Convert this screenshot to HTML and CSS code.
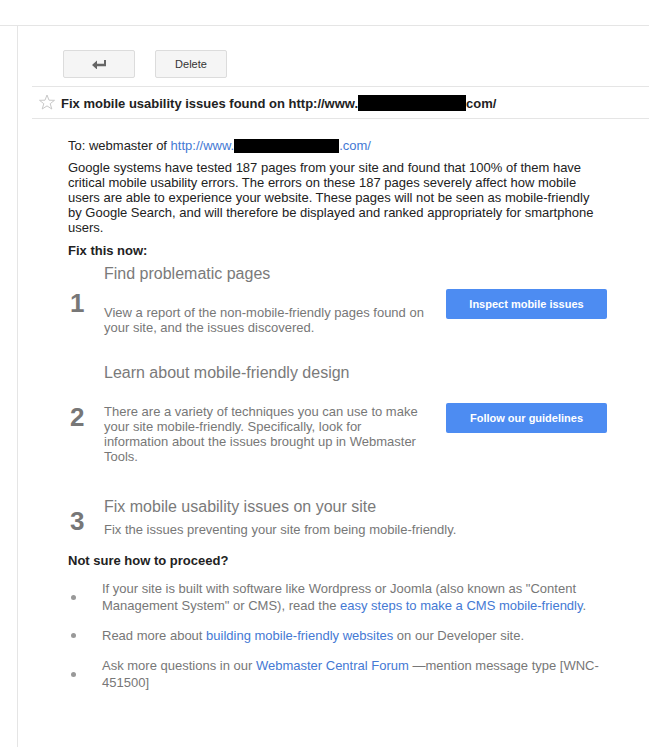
FILE: index.html
```html
<!doctype html>
<html lang="en">
<head>
  <title>Fix mobile usability issues</title>
  <link rel="stylesheet" href="styles.css">
</head>
<body>
  <div class="topbar"></div>
  <div class="main">
    <div class="toolbar">
      <button class="tool-btn" title="Back">
        <svg width="15" height="10" viewBox="0 0 15 10">
          <path d="M0 6 L5 1.5 V4.8 H12 V1 H14 V7.2 H5 V10.5 Z" fill="#666"/>
        </svg>
      </button>
      <button class="tool-btn">Delete</button>
    </div>
    <div class="subject">
      <svg class="star" width="16" height="16" viewBox="0 0 16 16">
        <polygon points="8,1 10,6.2 15.5,6.3 11.2,9.7 12.8,15 8,11.9 3.2,15 4.8,9.7 0.5,6.3 6,6.2"
          fill="none" stroke="#c8c8c8" stroke-width="1"/>
      </svg>
      <span class="subject-text">Fix mobile usability issues found on http://www.<span class="redact redact-title"></span>com/</span>
    </div>
    <div class="message">
      <p class="to">To: webmaster of <a href="#">http://www.<span class="redact redact-to"></span>.com/</a></p>
      <p class="intro">Google systems have tested 187 pages from your site and found that 100% of them have critical mobile usability errors. The errors on these 187 pages severely affect how mobile users are able to experience your website. These pages will not be seen as mobile-friendly by Google Search, and will therefore be displayed and ranked appropriately for smartphone users.</p>
      <h3 class="section">Fix this now:</h3>

      <div class="step">
        <div class="step-num">1</div>
        <div class="step-body">
          <div class="step-title">Find problematic pages</div>
          <div class="step-desc spaced">View a report of the non-mobile-friendly pages found on your site, and the issues discovered.</div>
        </div>
        <a class="action" href="#">Inspect mobile issues</a>
      </div>

      <div class="step">
        <div class="step-num">2</div>
        <div class="step-body">
          <div class="step-title">Learn about mobile-friendly design</div>
          <div class="step-desc spaced">There are a variety of techniques you can use to make your site mobile-friendly. Specifically, look for information about the issues brought up in Webmaster Tools.</div>
        </div>
        <a class="action" href="#">Follow our guidelines</a>
      </div>

      <div class="step step-last">
        <div class="step-num">3</div>
        <div class="step-body">
          <div class="step-title">Fix mobile usability issues on your site</div>
          <div class="step-desc wide">Fix the issues preventing your site from being mobile-friendly.</div>
        </div>
      </div>

      <h3 class="section help">Not sure how to proceed?</h3>
      <ul class="help-list">
        <li><span>If your site is built with software like Wordpress or Joomla (also known as "Content Management System" or CMS), read the <a href="#">easy steps to make a CMS mobile-friendly</a>.</span></li>
        <li><span>Read more about <a href="#">building mobile-friendly websites</a> on our Developer site.</span></li>
        <li><span>Ask more questions in our <a href="#">Webmaster Central Forum</a> &mdash;mention message type [WNC-451500]</span></li>
      </ul>
    </div>
  </div>
</body>
</html>
```

FILE: styles.css
```css
html, body {
  margin: 0;
  padding: 0;
  background: #fff;
  height: 100%;
  overflow: hidden;
}
body {
  font-family: "Liberation Sans", Arial, sans-serif;
  font-size: 13px;
  color: #222;
}
a {
  color: #4479d4;
  text-decoration: none;
}
.topbar {
  height: 25px;
  border-bottom: 1px solid #e5e5e5;
}
.main {
  margin-left: 17px;
  border-left: 1px solid #e5e5e5;
  padding-left: 14px;
  height: 100%;
}
.toolbar {
  display: flex;
  gap: 20px;
  padding: 24px 0 0 31px;
  height: 28px;
}
.tool-btn {
  width: 72px;
  height: 28px;
  display: flex;
  align-items: center;
  justify-content: center;
  background: #f5f5f5;
  border: 1px solid #dcdcdc;
  border-radius: 2px;
  font-family: "Liberation Sans", Arial, sans-serif;
  font-size: 11px;
  color: #333;
  padding: 0;
}
.subject {
  margin-top: 8px;
  height: 31px;
  border-top: 1px solid #e5e5e5;
  border-bottom: 1px solid #e5e5e5;
  display: flex;
  align-items: center;
  padding-left: 7px;
}
.star {
  margin-right: 6px;
  margin-top: -2px;
}
.subject-text {
  font-weight: bold;
  font-size: 13px;
  color: #222;
}
.redact {
  display: inline-block;
  background: #000;
  vertical-align: -3px;
}
.redact-title {
  width: 108px;
  height: 16px;
}
.redact-to {
  width: 105px;
  height: 14px;
}
.message {
  padding: 19px 0 0 36px;
  width: 535px;
}
.message p {
  margin: 0;
  line-height: 15px;
}
.to {
  margin-bottom: 7px !important;
}
.section {
  margin: 8px 0 0;
  font-size: 13px;
  line-height: 15px;
  font-weight: bold;
  color: #222;
}
.step {
  display: grid;
  grid-template-columns: 36px 342px 162px;
  align-items: center;
  margin-top: 6px;
  color: #777;
}
.step + .step {
  margin-top: 28px;
}
.step-last {
  margin-top: 33px !important;
}
.step-num {
  font-size: 26px;
  font-weight: bold;
  color: #777;
  padding-left: 2px;
  margin-top: 8px;
}
.step-title {
  font-size: 16px;
  line-height: 20px;
  color: #7a7a7a;
}
.step-desc {
  line-height: 15px;
  width: 322px;
}
.step-desc.spaced {
  margin-top: 21px;
}
.step-desc.wide {
  margin-top: 5px;
  width: 420px;
}
.action {
  display: flex;
  align-items: center;
  justify-content: center;
  height: 30px;
  width: 161px;
  margin-top: 8px;
  background: #4d8cf2;
  border-radius: 2px;
  color: #fff;
  font-size: 11px;
  font-weight: bold;
}
.help {
  margin-top: 16px;
}
.help-list {
  list-style: none;
  margin: 12px 0 0;
  padding: 0;
  color: #777;
}
.help-list li {
  display: flex;
  align-items: center;
  line-height: 17px;
  margin-bottom: 13px;
}
.help-list li::before {
  content: "";
  flex: none;
  width: 5px;
  height: 5px;
  border-radius: 50%;
  background: #999;
  margin: 0 26px 0 3px;
}
```
